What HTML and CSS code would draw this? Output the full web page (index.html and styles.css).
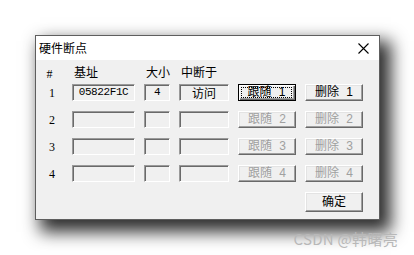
FILE: index.html
```html
<!DOCTYPE html>
<html>
<head>
<meta charset="utf-8">
<link rel="stylesheet" href="styles.css">
</head>
<body>
<div class="page">
  <div class="dialog">
    <div class="titlebar">
      <span class="title">硬件断点</span>
      <svg class="close" width="11" height="11" viewBox="0 0 11 11"><path d="M0.5 0.5 L10.5 10.5 M10.5 0.5 L0.5 10.5" stroke="#000" stroke-width="1.1" fill="none"/></svg>
    </div>
    <div class="body">
      <div class="hdr num">#</div>
      <div class="hdr">基址</div>
      <div class="hdr">大小</div>
      <div class="hdr">中断于</div>
      <div></div><div></div>

      <div class="num">1</div>
      <div class="field mono">05822F1C</div>
      <div class="field mono">4</div>
      <div class="field cjk">访问</div>
      <div class="btn focus"><span class="focusrect">跟随 1</span></div>
      <div class="btn">删除 1</div>

      <div class="num">2</div>
      <div class="field"></div>
      <div class="field"></div>
      <div class="field"></div>
      <div class="btn disabled">跟随 2</div>
      <div class="btn disabled">删除 2</div>

      <div class="num">3</div>
      <div class="field"></div>
      <div class="field"></div>
      <div class="field"></div>
      <div class="btn disabled">跟随 3</div>
      <div class="btn disabled">删除 3</div>

      <div class="num">4</div>
      <div class="field"></div>
      <div class="field"></div>
      <div class="field"></div>
      <div class="btn disabled">跟随 4</div>
      <div class="btn disabled">删除 4</div>

      <div class="ok btn">确定</div>
    </div>
  </div>
  <div class="mark">CSDN @韩曙亮</div>
</div>
</body>
</html>
```
FILE: styles.css
```css
html, body {
  margin: 0;
  padding: 0;
  background: #ffffff;
}
.page {
  width: 414px;
  height: 255px;
  padding: 35px 0 0 35px;
  box-sizing: border-box;
  overflow: hidden;
}
.dialog {
  width: 345px;
  height: 185px;
  box-sizing: border-box;
  border: 1px solid #5e5e5e;
  background: #f0f0f0;
  box-shadow: 8px 9px 16px 3px rgba(0, 0, 0, 0.82);
  font-family: "Liberation Serif", "Noto Sans CJK SC", serif;
  font-size: 12px;
  color: #000;
}
.titlebar {
  height: 24px;
  background: #ffffff;
  display: flex;
  align-items: center;
  justify-content: space-between;
  padding: 0 10px 0 3px;
}
.title {
  font-family: "Noto Sans CJK SC", sans-serif;
  font-size: 12px;
  line-height: 14px;
  color: #000;
}
.close {
  display: block;
}
.body {
  display: grid;
  grid-template-columns: 27px 63px 26px 50px 58px 58px;
  grid-template-rows: 14px repeat(4, 17px) 20px;
  column-gap: 9px;
  row-gap: 10px;
  padding: 0 0 7px 0;
  height: 159px;
  box-sizing: border-box;
}
.hdr {
  font-family: "Noto Sans CJK SC", sans-serif;
  padding: 5px 0 0 2px;
  line-height: 14px;
  white-space: nowrap;
}
.hdr.num {
  font-family: "Liberation Serif", serif;
  padding-left: 0;
}
.num {
  text-align: center;
  padding-left: 5px;
  line-height: 19px;
  font-family: "Liberation Serif", serif;
  font-size: 12px;
}
.field {
  box-sizing: border-box;
  border: 1px solid;
  border-color: #9a9a9a #ffffff #ffffff #9a9a9a;
  box-shadow: inset 1px 1px 0 #6a6a6a;
  background: #f0f0f0;
  text-align: center;
  line-height: 15px;
  white-space: nowrap;
  overflow: hidden;
}
.mono {
  font-family: "Liberation Mono", monospace;
  font-size: 11px;
  letter-spacing: -0.4px;
}
.cjk {
  font-family: "Noto Sans CJK SC", sans-serif;
  font-size: 12px;
}
.btn {
  box-sizing: border-box;
  border: 1px solid;
  border-color: #ffffff #696969 #696969 #ffffff;
  box-shadow: inset -1px -1px 0 #a0a0a0, inset 1px 1px 0 #e3e3e3;
  background: #f0f0f0;
  font-family: "Liberation Sans", "Noto Sans CJK SC", sans-serif;
  font-size: 12px;
  line-height: 15px;
  text-align: center;
  white-space: nowrap;
  word-spacing: 4px;
  color: #000;
}
.btn.disabled {
  color: #a0a0a0;
}
.btn.focus {
  border: 1px solid #000;
  box-shadow: inset 1px 1px 0 #ffffff, inset -1px -1px 0 #696969, inset -2px -2px 0 #a0a0a0;
  padding: 2px 3px 2px 2px;
  line-height: 9px;
}
.focusrect {
  display: block;
  height: 11px;
  border: 1px dotted #000;
  box-sizing: border-box;
  line-height: 9px;
  overflow: visible;
}
.ok {
  grid-column: 6;
  line-height: 18px;
  word-spacing: 0;
}
.mark {
  margin-top: 11px;
  padding-right: 16px;
  text-align: right;
  font-family: "Noto Sans CJK SC", sans-serif;
  font-size: 15px;
  line-height: 16px;
  letter-spacing: 0.3px;
  color: #b8b8b8;
}
```
